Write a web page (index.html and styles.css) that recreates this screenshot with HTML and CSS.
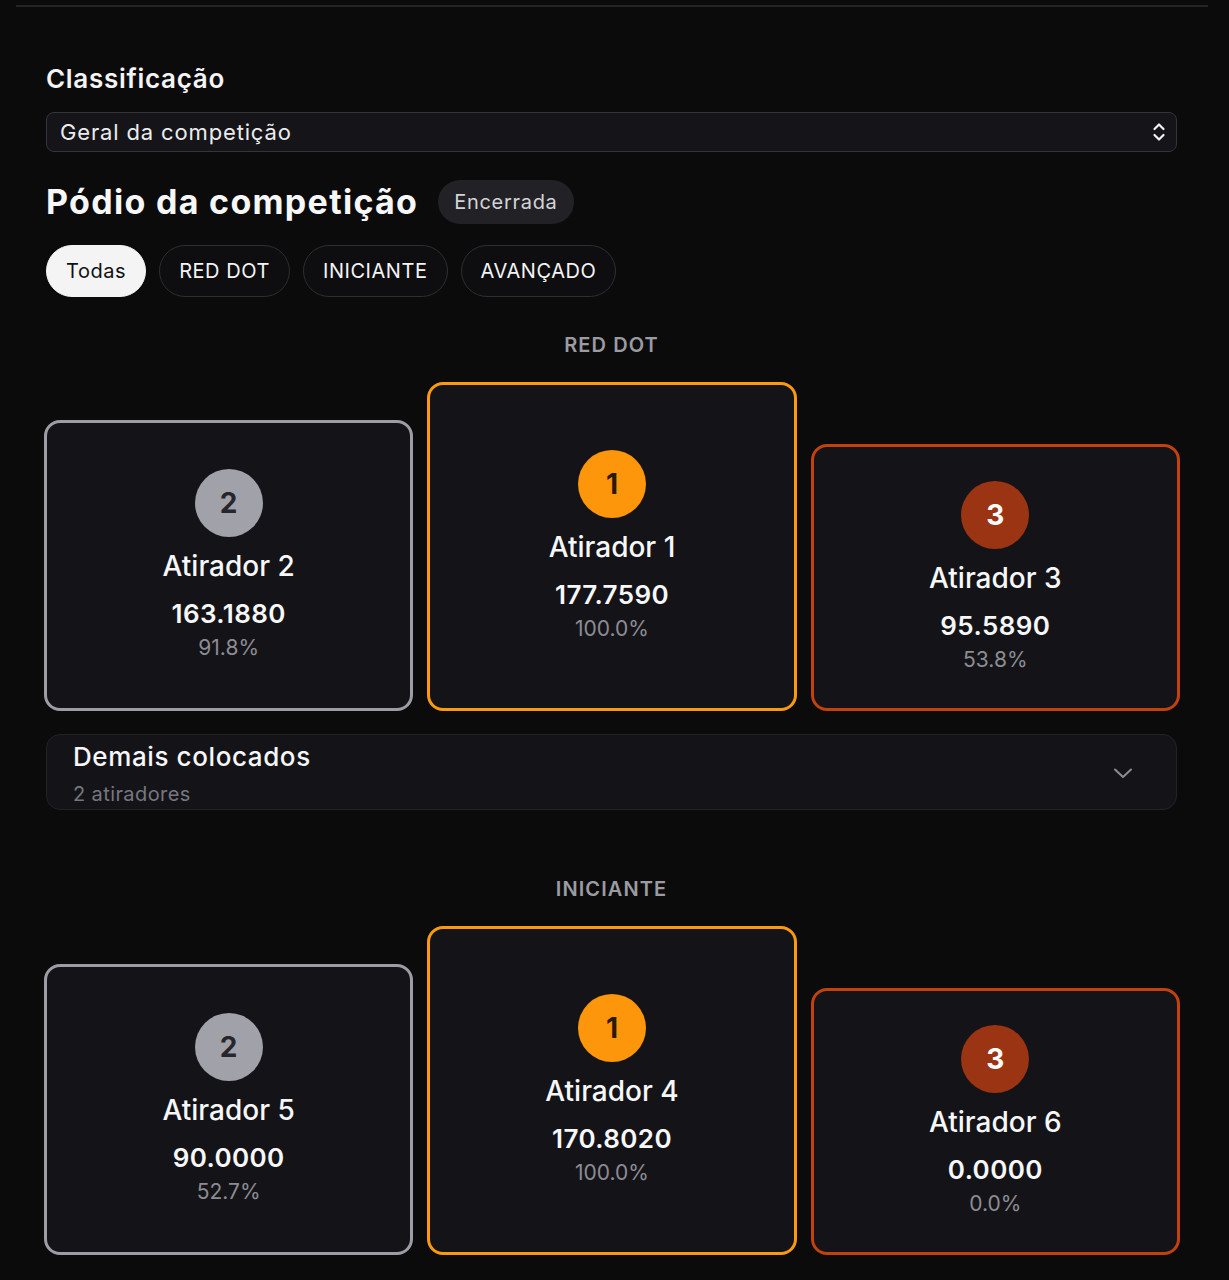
FILE: index.html
```html
<!DOCTYPE html>
<html lang="pt-BR">
<head>
<meta charset="utf-8">
<title>Pódio da competição</title>
<link rel="stylesheet" href="styles.css">
</head>
<body>
<div class="topline"></div>
<main class="page">
  <label class="field-label" for="class-select">Classificação</label>
  <div class="select">
    <span class="select-value">Geral da competição</span>
    <svg class="select-icon" viewBox="0 0 14 20" width="14" height="20" aria-hidden="true">
      <path d="M2.5 7 L7 2.5 L11.5 7" fill="none" stroke="#f2f2f2" stroke-width="2.2" stroke-linecap="round" stroke-linejoin="round"/>
      <path d="M2.5 13 L7 17.5 L11.5 13" fill="none" stroke="#f2f2f2" stroke-width="2.2" stroke-linecap="round" stroke-linejoin="round"/>
    </svg>
  </div>

  <div class="title-row">
    <h1 class="title">Pódio da competição</h1>
    <span class="badge">Encerrada</span>
  </div>

  <div class="pills">
    <button class="pill active">Todas</button>
    <button class="pill">RED DOT</button>
    <button class="pill">INICIANTE</button>
    <button class="pill">AVANÇADO</button>
  </div>

  <section class="category">
    <h2 class="category-title">RED DOT</h2>
    <div class="podium">
      <div class="card silver">
        <div class="medal">2</div>
        <div class="name">Atirador 2</div>
        <div class="score">163.1880</div>
        <div class="pct">91.8%</div>
      </div>
      <div class="card gold">
        <div class="medal">1</div>
        <div class="name">Atirador 1</div>
        <div class="score">177.7590</div>
        <div class="pct">100.0%</div>
      </div>
      <div class="card bronze">
        <div class="medal">3</div>
        <div class="name">Atirador 3</div>
        <div class="score">95.5890</div>
        <div class="pct">53.8%</div>
      </div>
    </div>
    <div class="others">
      <div class="others-text">
        <div class="others-title">Demais colocados</div>
        <div class="others-sub">2 atiradores</div>
      </div>
      <svg class="others-icon" viewBox="0 0 20 14" width="20" height="14" aria-hidden="true">
        <path d="M2 3.5 L10 11 L18 3.5" fill="none" stroke="#8b8b92" stroke-width="2" stroke-linecap="round" stroke-linejoin="round"/>
      </svg>
    </div>
  </section>

  <section class="category second">
    <h2 class="category-title">INICIANTE</h2>
    <div class="podium">
      <div class="card silver">
        <div class="medal">2</div>
        <div class="name">Atirador 5</div>
        <div class="score">90.0000</div>
        <div class="pct">52.7%</div>
      </div>
      <div class="card gold">
        <div class="medal">1</div>
        <div class="name">Atirador 4</div>
        <div class="score">170.8020</div>
        <div class="pct">100.0%</div>
      </div>
      <div class="card bronze">
        <div class="medal">3</div>
        <div class="name">Atirador 6</div>
        <div class="score">0.0000</div>
        <div class="pct">0.0%</div>
      </div>
    </div>
  </section>
</main>
</body>
</html>
```

FILE: styles.css
```css
* { box-sizing: border-box; }

html, body {
  margin: 0;
  padding: 0;
  background: #0b0b0c;
  color: #f4f4f5;
  font-family: Inter, "Noto Sans", "Liberation Sans", sans-serif;
}

body {
  height: 1280px;
  overflow: hidden;
  padding-top: 5px;
}

.topline {
  height: 2px;
  margin: 0 21px 0 16px;
  background: #242428;
}

.page {
  width: 1131px;
  margin-left: 46px;
  display: flex;
  flex-direction: column;
}

.field-label {
  margin-top: 57px;
  font-size: 26px;
  line-height: 30px;
  font-weight: 600;
  letter-spacing: 0.7px;
  color: #f4f4f5;
}

.select {
  margin-top: 18px;
  height: 40px;
  border: 1.5px solid #34343a;
  border-radius: 8px;
  background: #151519;
  display: flex;
  align-items: center;
  justify-content: space-between;
  padding: 0 10px 0 13px;
}

.select-value {
  font-size: 22px;
  letter-spacing: 0.85px;
  color: #ececee;
}

.select-icon { display: block; }

.title-row {
  margin-top: 28px;
  display: flex;
  align-items: center;
  gap: 20px;
  height: 44px;
}

.title {
  margin: 0;
  font-size: 34px;
  line-height: 44px;
  font-weight: 700;
  letter-spacing: 1.3px;
  color: #f7f7f8;
}

.badge {
  height: 44px;
  padding: 0 16px;
  border-radius: 22px;
  background: #222226;
  color: #d4d4d8;
  font-size: 20px;
  letter-spacing: 0.7px;
  display: flex;
  align-items: center;
}

.pills {
  margin-top: 21px;
  display: flex;
  gap: 13px;
}

.pill {
  height: 52px;
  padding: 0 19px;
  border-radius: 26px;
  border: 1.5px solid #2e2e33;
  background: #0e0e10;
  color: #f4f4f5;
  font-family: inherit;
  font-size: 20px;
  letter-spacing: 0.55px;
  display: flex;
  align-items: center;
}

.pill.active {
  background: #f4f4f5;
  border-color: #f4f4f5;
  color: #111114;
}

.category { display: flex; flex-direction: column; }
.category.second { margin-top: 31px; }

.category-title {
  margin: 36px 0 0;
  text-align: center;
  font-size: 20px;
  line-height: 24px;
  font-weight: 600;
  color: #9b9ba2;
  letter-spacing: 1.1px;
}

.podium {
  margin: 25px -3px 0 -2px;
  display: flex;
  align-items: flex-end;
  gap: 14px;
}

.card {
  flex: 1 1 0;
  border: 3px solid;
  border-radius: 16px;
  background: #141418;
  display: flex;
  flex-direction: column;
  align-items: center;
  justify-content: center;
  padding-bottom: 3px;
}

.card.silver { height: 291px; border-color: #9d9da5; }
.card.gold { height: 329px; border-color: #fb9a0e; }
.card.bronze { height: 267px; border-color: #c2410c; }

.medal {
  width: 68px;
  height: 68px;
  border-radius: 50%;
  display: flex;
  align-items: center;
  justify-content: center;
  font-size: 28px;
  font-weight: 700;
}

.silver .medal { background: #a1a1aa; color: #26262b; }
.gold .medal { background: #fd960a; color: #2a1a05; }
.bronze .medal { background: #9a3412; color: #ffffff; }

.name {
  margin-top: 12px;
  font-size: 28px;
  line-height: 34px;
  font-weight: 500;
  color: #f7f7f8;
}

.score {
  margin-top: 16px;
  font-size: 26px;
  line-height: 30px;
  font-weight: 600;
  letter-spacing: 0.4px;
  color: #f7f7f8;
}

.pct {
  margin-top: 7px;
  font-size: 21px;
  line-height: 24px;
  color: #8c8c93;
}

.others {
  margin-top: 23px;
  height: 76px;
  border: 1px solid #222227;
  border-radius: 14px;
  background: #141418;
  display: flex;
  align-items: center;
  justify-content: space-between;
  padding: 0 43px 0 26px;
}

.others-text { display: flex; flex-direction: column; margin-top: 2px; }

.others-title {
  font-size: 26px;
  line-height: 32px;
  font-weight: 500;
  letter-spacing: 0.6px;
  color: #f7f7f8;
}

.others-sub {
  margin-top: 9px;
  font-size: 20px;
  line-height: 24px;
  letter-spacing: 0.4px;
  color: #77777e;
}

.others-icon { display: block; margin-top: 2px; }
```
